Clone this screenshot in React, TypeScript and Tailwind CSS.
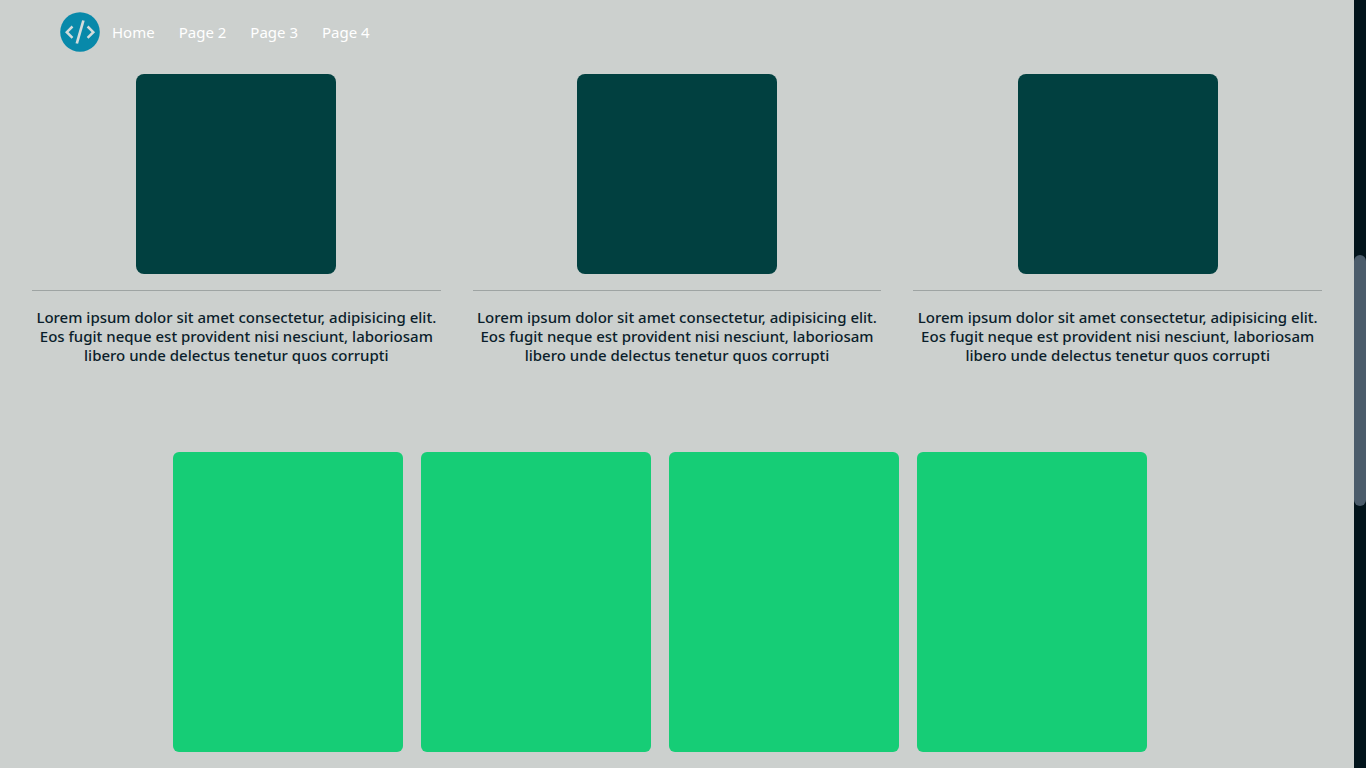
const links = ['Home', 'Page 2', 'Page 3', 'Page 4'];
const features = [1, 2, 3];
const cards = [1, 2, 3, 4];

function Logo() {
  return (
    <svg viewBox="0 0 40 40" className="size-10" aria-hidden="true">
      <circle cx="20" cy="20" r="19.8" fill="#0889aa" />
      <g fill="none" stroke="#d3dcdc" strokeWidth="2.5">
        <path d="M12.5 14.5 6.8 20.2l5.7 5.6M27.6 14.5l5.7 5.7-5.7 5.6" />
        <path d="M23.4 8.5 16.8 31.5" strokeWidth="2.7" />
      </g>
    </svg>
  );
}

export default function App() {
  return (
    <div className="flex min-h-screen bg-[#ccd0ce] font-['Noto_Sans','Open_Sans',sans-serif]">
      <div className="min-w-0 flex-1">
        <header className="flex h-16 items-center px-15">
          <a href="#home" aria-label="Home page">
            <Logo />
          </a>
          <nav className="flex">
            {links.map((label) => (
              <a key={label} href="#" className="px-3 text-[15px] leading-6 text-white">
                {label}
              </a>
            ))}
          </nav>
        </header>
        <main>
          <section className="grid grid-cols-3 gap-8 px-8 pt-[10px]">
            {features.map((id) => (
              <article key={id} className="text-center">
                <div className="mx-auto size-50 rounded-lg bg-[#014040]" />
                <hr className="mt-4 mb-[17px] border-[#9ea4a3]" />
                <p className="text-[15px] leading-[19px] font-medium text-[#0b1e2b]">
                  Lorem ipsum dolor sit amet consectetur, adipisicing elit. Eos fugit neque est
                  provident nisi nesciunt, laboriosam libero unde delectus tenetur quos corrupti
                </p>
              </article>
            ))}
          </section>
          <section className="flex justify-center gap-[18px] pt-[87px] pr-[34px] pb-4">
            {cards.map((id) => (
              <div key={id} className="h-75 w-[230px] rounded-md bg-[#16cd76]" />
            ))}
          </section>
        </main>
      </div>
      <div className="w-3 shrink-0 bg-[#02141b] pt-[255px]" aria-hidden="true">
        <div className="h-[251px] rounded-full bg-[#4b5c6b]" />
      </div>
    </div>
  );
}
